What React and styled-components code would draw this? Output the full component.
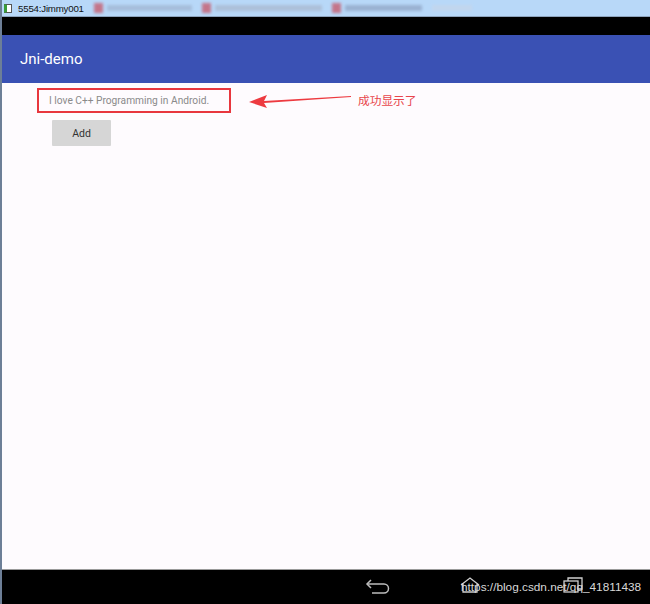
import React from 'react';
import styled, { createGlobalStyle } from 'styled-components';

const GlobalStyle = createGlobalStyle`
  html, body {
    margin: 0;
    padding: 0;
    width: 650px;
    height: 604px;
    overflow: hidden;
    background: #fefbfe;
  }
`

const Screen = styled.div`
  width: 650px;
  height: 604px;
  display: flex;
  flex-direction: column;
  font-family: Roboto, "Noto Sans", sans-serif;
  box-sizing: border-box;
  border-left: 2px solid #6d7f97;
`

const TitleBar = styled.div`
  height: 16px;
  background: #b8d8f8;
  border-bottom: 1px solid #8ea4bd;
  display: flex;
  align-items: center;
  padding-left: 2px;
  gap: 6px;
  overflow: hidden;
`

const WinIcon = styled.div`
  width: 8px;
  height: 9px;
  background: #fff;
  border: 1px solid #555;
  border-left: 3px solid #3a9b3a;
  box-sizing: border-box;
`

const WinTitle = styled.span`
  font-family: "Liberation Sans", Arial, sans-serif;
  font-size: 9.7px;
  color: #111;
  letter-spacing: -0.2px;
`

const BlurTabs = styled.div`
  display: flex;
  gap: 10px;
  margin-left: 4px;
  filter: blur(1.8px);
  opacity: 0.7;
  align-items: center;
`

const BlurTab = styled.div`
  display: flex;
  align-items: center;
  gap: 4px;
  width: ${p => p.$w}px;
`

const BlurIcon = styled.div`
  width: 9px;
  height: 10px;
  background: #c94c5c;
`

const BlurText = styled.div`
  flex: 1;
  height: 6px;
  background: ${p => p.$c || '#9fb3cf'};
`

const StatusBar = styled.div`
  height: 18px;
  background: #000;
`

const AppBar = styled.div`
  height: 48px;
  background: #3a51b4;
  display: flex;
  align-items: center;
  padding-left: 18px;
  color: #fff;
  font-size: 15px;
`

const Content = styled.div`
  flex: 1;
  background: #fefbfe;
  padding-top: 5px;
  display: flex;
  flex-direction: column;
`

const MessageRow = styled.div`
  display: flex;
  align-items: center;
  padding-left: 35px;
`

const MessageBox = styled.div`
  width: 194px;
  height: 25px;
  box-sizing: border-box;
  border: 2px solid #e8373e;
  display: flex;
  align-items: center;
  padding-left: 10px;
  font-size: 10.2px;
  color: #8a8a8a;
`

const Arrow = styled.svg`
  margin-left: 18px;
  width: 104px;
  height: 20px;
`

const Note = styled.span`
  margin-left: 5px;
  font-family: "Noto Sans CJK SC", sans-serif;
  font-size: 11.7px;
  color: #e8454c;
  margin-top: -3px;
`

const AddButton = styled.div`
  margin-left: 50px;
  margin-top: 7px;
  width: 59px;
  height: 26px;
  background: #d6d6d6;
  border-radius: 1px;
  display: flex;
  align-items: center;
  justify-content: center;
  font-size: 10.5px;
  color: #333;
`

const NavBar = styled.div`
  height: 34px;
  background: #000;
  border-top: 1px solid #9a9a9a;
  position: relative;
  display: flex;
  align-items: center;
`

const NavIcon = styled.svg`
  position: absolute;
  left: ${p => p.$x}px;
  top: ${p => p.$y}px;
`

const Watermark = styled.span`
  position: absolute;
  left: 459px;
  top: 10px;
  font-family: "Liberation Sans", Arial, sans-serif;
  font-size: 11.8px;
  color: #d8d8d8;
`

const App = () => {
  return (
    <>
      <GlobalStyle />
      <Screen>
        <TitleBar>
          <WinIcon />
          <WinTitle>5554:Jimmy001</WinTitle>
          <BlurTabs>
            <BlurTab $w={98}><BlurIcon /><BlurText /></BlurTab>
            <BlurTab $w={120}><BlurIcon /><BlurText $c="#a8b6cc" /></BlurTab>
            <BlurTab $w={90}><BlurIcon /><BlurText $c="#8ea2c2" /></BlurTab>
            <BlurTab $w={40}><BlurText $c="#c6d6ea" /></BlurTab>
          </BlurTabs>
        </TitleBar>
        <StatusBar />
        <AppBar>Jni-demo</AppBar>
        <Content>
          <MessageRow>
            <MessageBox>I love C++ Programming in Android.</MessageBox>
            <Arrow viewBox="0 0 104 20">
              <polygon points="0,11 18,4 15,10 102,5 102,6 15,12 18,17" fill="#ed3a40" />
            </Arrow>
            <Note>成功显示了</Note>
          </MessageRow>
          <AddButton>Add</AddButton>
        </Content>
        <NavBar>
          <NavIcon $x={362} $y={9} width="28" height="16" viewBox="0 0 28 16" fill="none" stroke="#bdbdbd" strokeWidth="1.5">
            <path d="M7 1 L3 5 L7 9" />
            <path d="M3 5 H20 a4.5 4.5 0 0 1 0 9 H8" />
          </NavIcon>
          <NavIcon $x={457} $y={6} width="22" height="18" viewBox="0 0 22 18" fill="none" stroke="#cfcfcf" strokeWidth="1.3">
            <path d="M2 9 L11 2 L20 9 M4 8 V16 H18 V8" />
          </NavIcon>
          <NavIcon $x={560} $y={6} width="22" height="18" viewBox="0 0 22 18" fill="none" stroke="#cfcfcf" strokeWidth="1.3">
            <rect x="2" y="5" width="14" height="11" />
            <path d="M6 5 V2 H20 V13 H16" />
          </NavIcon>
          <Watermark>https://blog.csdn.net/qq_41811438</Watermark>
        </NavBar>
      </Screen>
    </>
  );
};

export default App;
